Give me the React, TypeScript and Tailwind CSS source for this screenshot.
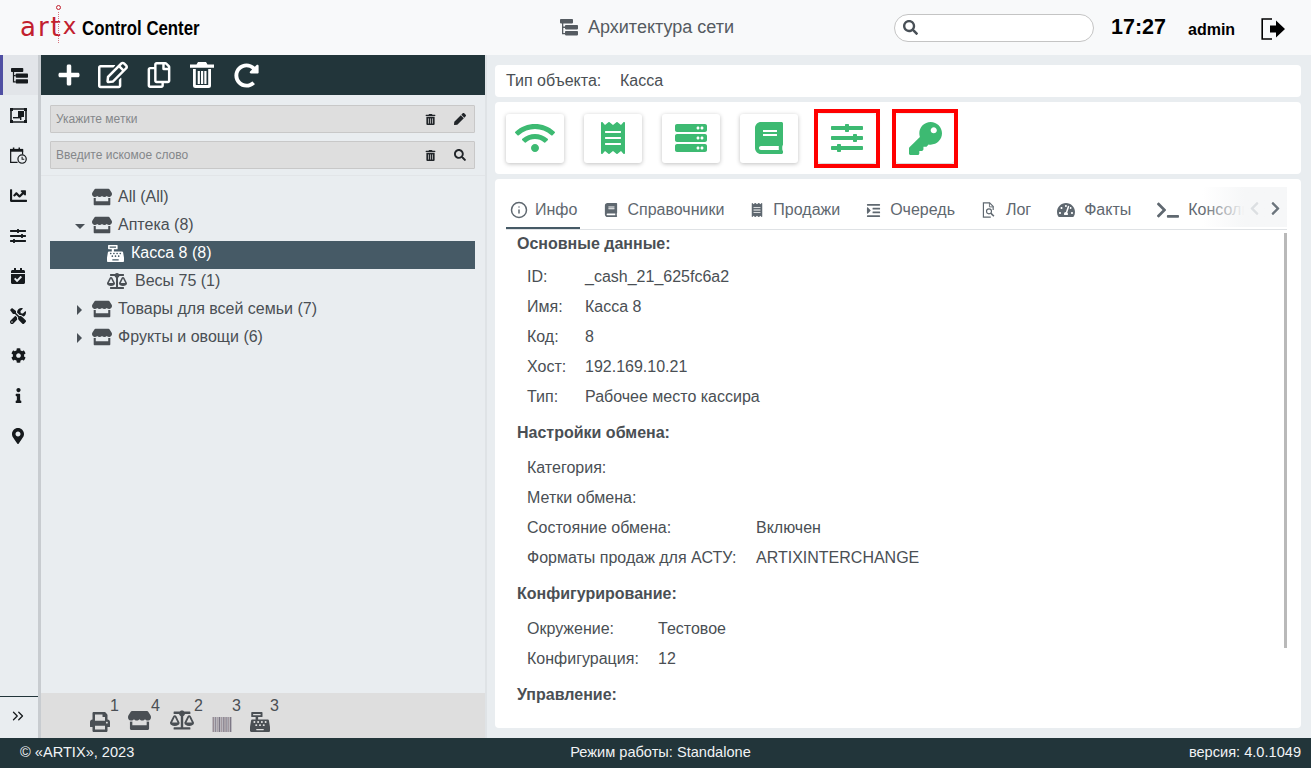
import { useState } from "react";
import { Info, ChevronsRight } from "lucide-react";
import {
  FaPlus,
  FaRegEdit,
  FaRegCopy,
  FaRedoAlt,
  FaChartLine,
  FaSlidersH,
  FaCalendarCheck,
  FaTools,
  FaCog,
  FaInfo,
  FaMapMarkerAlt,
  FaStore,
  FaCashRegister,
  FaBalanceScale,
  FaPrint,
  FaWifi,
  FaReceipt,
  FaServer,
  FaBook,
  FaKey,
  FaTrashAlt,
  FaPen,
  FaSearch,
  FaIndent,
  FaTachometerAlt,
  FaTerminal,
  FaChevronLeft,
  FaChevronRight,
} from "react-icons/fa";

const font = "font-['Liberation_Sans',Arial,sans-serif]";

const TreeIcon = ({ className }: { className?: string }) => (
  <svg viewBox="0 0 18 18" className={className} fill="currentColor">
    <rect x="0" y="1" width="13" height="4.4" rx="0.8" />
    <rect x="5" y="7" width="13" height="4.4" rx="0.8" />
    <rect x="5" y="13" width="13" height="4.4" rx="0.8" />
    <path d="M2 5h1.3v10H5v1.3H2zM3 8.6h2v1.3H3z" />
  </svg>
);

const GroupIcon = ({ className }: { className?: string }) => (
  <svg viewBox="0 0 17 15" className={className} fill="currentColor">
    <path d="M1 1h15v13H1z" fill="none" stroke="currentColor" strokeWidth="1.6" />
    <rect x="0" y="0" width="3" height="3" />
    <rect x="14" y="0" width="3" height="3" />
    <rect x="0" y="12" width="3" height="3" />
    <rect x="14" y="12" width="3" height="3" />
    <rect x="3" y="3" width="5" height="6" fill="#e9edf0" />
    <rect x="8" y="3" width="6" height="6" />
    <rect x="3" y="9" width="8" height="1.4" />
    <rect x="10" y="9" width="1.4" height="3" />
  </svg>
);

const CalendarClock = ({ className }: { className?: string }) => (
  <svg viewBox="0 0 18 18" className={className}>
    <path d="M0 2h14v3H0z" fill="currentColor" />
    <path d="M3 0.5h1.6v3H3zM9 0.5h1.6v3H9z" fill="currentColor" />
    <path d="M.7 4v12.3H8M13.3 4v4" fill="none" stroke="currentColor" strokeWidth="1.3" />
    <circle cx="12.8" cy="12.8" r="4.4" fill="#e9edf0" stroke="currentColor" strokeWidth="1.3" />
    <path d="M12.8 10.2v2.8h2.3" fill="none" stroke="currentColor" strokeWidth="1.1" />
  </svg>
);

const LogoutIcon = ({ className }: { className?: string }) => (
  <svg viewBox="0 0 25 22" className={className}>
    <path d="M11 1H1.2v20H11" fill="none" stroke="currentColor" strokeWidth="1.6" />
    <path d="M9 7.5h6V2.5l9 8.5-9 8.5v-5H9z" fill="currentColor" />
  </svg>
);

const BarcodeIcon = ({ className }: { className?: string }) => (
  <svg viewBox="0 0 20 15" className={className}>
    <rect width="20" height="15" fill="#b9b7bd" />
    {[1, 3, 5.5, 7, 9, 11, 12.5, 14.5, 16, 18].map((x, i) => (
      <rect key={x} x={x} width={i % 3 === 0 ? 1 : 0.7} height="15" fill={i % 2 ? "#7d7886" : "#9a8d94"} />
    ))}
  </svg>
);

const TrashBig = ({ className }: { className?: string }) => (
  <svg viewBox="0 0 24 26" className={className} fill="currentColor">
    <path d="M8 0h8l1.5 2.5H24v3.2H0V2.5h6.5z" />
    <path d="M3 7v16.5A2.5 2.5 0 0 0 5.500 26h13a2.500 2.500 0 0 0 2.500-2.500V7h-2.800v16h-12.400V7z" />
    <rect x="7.700" y="9" width="2.200" height="13" />
    <rect x="11" y="9" width="2.200" height="13" />
    <rect x="14.300" y="9" width="2.200" height="13" />
  </svg>
);

const LogFileIcon = ({ className }: { className?: string }) => (
  <svg viewBox="0 0 16 18" className={className} fill="none" stroke="currentColor">
    <path d="M10 17H1.700V1h7l4 4v4" strokeWidth="1.300" />
    <path d="M8.500 1v4.500h4.500" strokeWidth="1" />
    <circle cx="8" cy="10.500" r="2.800" strokeWidth="1.300" />
    <path d="M10 12.500l3.500 3.500" strokeWidth="1.800" />
  </svg>
);

const sideItems = [
  { icon: TreeIcon, size: "size-[17px]", active: true },
  { icon: GroupIcon, size: "size-[17px]" },
  { icon: CalendarClock, size: "size-[17px]" },
  { icon: FaChartLine, size: "size-[17px]" },
  { icon: FaSlidersH, size: "size-[16px]" },
  { icon: FaCalendarCheck, size: "size-[16px]" },
  { icon: FaTools, size: "size-[16px]" },
  { icon: FaCog, size: "size-[15px]" },
  { icon: FaInfo, size: "size-[15px]" },
  { icon: FaMapMarkerAlt, size: "size-[16px]" },
];

const actions = [
  { icon: FaWifi, size: "size-[40px]" },
  { icon: FaReceipt, size: "size-[32px]" },
  { icon: FaServer, size: "size-[32px]" },
  { icon: FaBook, size: "size-[32px]" },
  { icon: FaSlidersH, size: "size-[32px]", marked: true },
  { icon: FaKey, size: "size-[33px]", marked: true },
];

const tabs = [
  { icon: Info, label: "Инфо", size: "size-[18px]", active: true },
  { icon: FaBook, label: "Справочники", size: "size-[14px]" },
  { icon: FaReceipt, label: "Продажи", size: "size-[14px]" },
  { icon: FaIndent, label: "Очередь", size: "size-[15px]" },
  { icon: LogFileIcon, label: "Лог", size: "size-[16px]" },
  { icon: FaTachometerAlt, label: "Факты", size: "size-[18px]" },
  { icon: FaTerminal, label: "Консоль", size: "size-[22px]" },
];

const sections = [
  {
    title: "Основные данные:",
    labelWidth: "w-[58px]",
    mt: "mt-0",
    rowsTop: "mt-[15px]",
    rows: [
      ["ID:", "_cash_21_625fc6a2"],
      ["Имя:", "Касса 8"],
      ["Код:", "8"],
      ["Хост:", "192.169.10.21"],
      ["Тип:", "Рабочее место кассира"],
    ],
  },
  {
    title: "Настройки обмена:",
    labelWidth: "w-[229px]",
    mt: "mt-[18px]",
    rowsTop: "mt-[17px]",
    rows: [
      ["Категория:", ""],
      ["Метки обмена:", ""],
      ["Состояние обмена:", "Включен"],
      ["Форматы продаж для АСТУ:", "ARTIXINTERCHANGE"],
    ],
  },
  {
    title: "Конфигурирование:",
    labelWidth: "w-[131px]",
    mt: "mt-[18px]",
    rowsTop: "mt-[17px]",
    rows: [
      ["Окружение:", "Тестовое"],
      ["Конфигурация:", "12"],
    ],
  },
  { title: "Управление:", labelWidth: "", mt: "mt-[18px]", rowsTop: "", rows: [] },
];

const TreeRow = ({
  label,
  pad,
  caret,
  selected,
  icon: Icon,
  iconSize,
  gap,
}: {
  label: string;
  pad: string;
  caret?: "open" | "closed";
  selected?: boolean;
  icon: React.ElementType;
  iconSize: string;
  gap: string;
}) => (
  <div className={`flex h-[28px] items-center ${pad} ${selected ? "bg-[#465a66] pb-[4px] text-white" : "text-[#4a4f54]"}`}>
    {caret === "open" && <span className="mr-[7px] mt-[2px] h-0 w-0 border-x-[5px] border-t-[5px] border-x-transparent border-t-[#495057]" />}
    {caret === "closed" && <span className="ml-[2px] mr-[10px] mt-[2px] h-0 w-0 border-y-[5px] border-l-[5px] border-y-transparent border-l-[#495057]" />}
    <Icon className={iconSize} />
    <span className={`${gap} text-[16px]`}>{label}</span>
  </div>
);

const BottomStat = ({
  icon: Icon,
  n,
  size,
  width,
}: {
  icon: React.ElementType;
  n: number;
  size: string;
  width: string;
}) => (
  <div className={`flex ${width} items-end text-[#4a4f54]`}>
    <Icon className={`${size} mb-[6px]`} />
    <span className="mb-[24px] text-[16px] leading-none">{n}</span>
  </div>
);

export default function App() {
  const [tab] = useState("Инфо");

  return (
    <div className={`flex h-screen w-full flex-col overflow-hidden bg-[#e9edf0] ${font}`}>
      {/* Header */}
      <header className="flex h-[55px] shrink-0 items-center bg-[#f8f9fa]">
        <div className="relative ml-[20px] flex w-[200px] items-center">
          <span className="-mt-[2px] font-['DejaVu_Sans',sans-serif] text-[26px] leading-none tracking-[2px] text-[#c2202e]">art</span>
          <span className="absolute left-[37px] top-[-7px] flex h-[38px] w-[3px] flex-col items-center">
            <span className="size-[5px] shrink-0 rounded-full border border-[#c2202e]" />
            <span className="mt-[2px] h-full w-px border-l border-dotted border-[#d8737c]" />
          </span>
          <span className="-mt-[2px] font-['DejaVu_Sans',sans-serif] text-[23px] leading-none text-[#c2202e]">x</span>
          <span className="ml-[6px] origin-left scale-x-[0.8] whitespace-nowrap text-[21px] font-bold text-black">Control Center</span>
        </div>
        <div className="ml-[340px] -mt-[1px] flex w-[200px] items-center text-[#555b61]">
          <TreeIcon className="size-[18px]" />
          <span className="ml-[10px] whitespace-nowrap text-[18px]">Архитектура сети</span>
        </div>
        <div className="ml-[134px] flex h-[28px] w-[200px] items-center rounded-full border border-[#c4c4c4] bg-white pl-[8px]">
          <FaSearch className="size-[15px] text-[#495057]" />
        </div>
        <span className="ml-[17px] text-[21.500px] font-bold text-black">17:27</span>
        <span className="ml-[22px] mt-[5px] text-[16px] font-bold text-black">admin</span>
        <LogoutIcon className="ml-[26px] mt-[2px] h-[22px] w-[25px] text-black" />
      </header>

      <div className="flex min-h-0 flex-1">
        {/* Icon rail */}
        <nav className="flex w-[41px] shrink-0 flex-col border-r-[3px] border-[#c8ccd0] bg-[#e9edf0]">
          {sideItems.map((s, i) => (
            <div
              key={i}
              className={`flex h-[40px] items-center justify-center pr-[2px] pt-[1px] text-[#161a1d] ${s.active ? "border-l-[3px] border-[#4f4fa3] bg-[#e2e5e9]" : ""}`}
            >
              <s.icon className={s.size} />
            </div>
          ))}
          <div className="mt-auto flex h-[42px] items-center justify-center border-t border-[#22353a] pb-[3px] pr-[2px]">
            <ChevronsRight className="size-[18px] text-[#161a1d]" strokeWidth={1.700} />
          </div>
        </nav>

        {/* Tree panel */}
        <aside className="flex w-[446px] shrink-0 flex-col border-r-[2px] border-[#dfe3e6]">
          <div className="flex h-[40px] shrink-0 items-center gap-[16px] bg-[#22353a] pl-[16px] text-white">
            <FaPlus className="size-[24px]" />
            <FaRegEdit className="ml-[1px] size-[30px]" />
            <FaRegCopy className="ml-[2px] size-[26px]" />
            <TrashBig className="ml-[2px] h-[26px] w-[24px]" />
            <FaRedoAlt className="ml-[4px] size-[25px]" />
          </div>
          <div className="flex flex-col gap-[8px] border-b border-[#e2e5e8] pb-[6px] pl-[9px] pr-[10px] pt-[10px]">
            <div className="flex h-[28px] items-center rounded-[1px] border border-[#c8c8c8] bg-[#dedede] pl-[5px] text-[12px] text-[#84878a]">
              <span className="flex-1">Укажите метки</span>
              <FaTrashAlt className="mr-[18px] size-[11px] text-[#212529]" />
              <FaPen className="mr-[8px] size-[12px] text-[#212529]" />
            </div>
            <div className="flex h-[28px] items-center rounded-[1px] border border-[#c8c8c8] bg-[#dedede] pl-[5px] text-[12px] text-[#84878a]">
              <span className="flex-1">Введите искомое слово</span>
              <FaTrashAlt className="mr-[18px] size-[11px] text-[#212529]" />
              <FaSearch className="mr-[8px] size-[12px] text-[#212529]" />
            </div>
          </div>
          <div className="flex-1 pl-[9px] pr-[10px] pt-[7px]">
            <TreeRow label="All (All)" pad="pl-[42px]" icon={FaStore} iconSize="size-[20px]" gap="ml-[6px]" />
            <TreeRow label="Аптека (8)" pad="pl-[25px]" caret="open" icon={FaStore} iconSize="size-[20px]" gap="ml-[6px]" />
            <div className="-mb-[2px] mt-[2px]">
              <TreeRow label="Касса 8 (8)" pad="pl-[57px]" selected icon={FaCashRegister} iconSize="size-[17px]" gap="ml-[7px]" />
            </div>
            <TreeRow label="Весы 75 (1)" pad="pl-[57px]" icon={FaBalanceScale} iconSize="size-[20px]" gap="ml-[8px]" />
            <TreeRow label="Товары для всей семьи (7)" pad="pl-[25px]" caret="closed" icon={FaStore} iconSize="size-[20px]" gap="ml-[6px]" />
            <TreeRow label="Фрукты и овощи (6)" pad="pl-[25px]" caret="closed" icon={FaStore} iconSize="size-[20px]" gap="ml-[6px]" />
          </div>
          <div className="flex h-[45px] shrink-0 items-end bg-[#dedede] pl-[49px]">
            <BottomStat icon={FaPrint} n={1} size="size-[20px]" width="w-[38px]" />
            <BottomStat icon={FaStore} n={4} size="size-[23px]" width="w-[42px]" />
            <BottomStat icon={FaBalanceScale} n={2} size="size-[24px]" width="w-[42px]" />
            <BottomStat icon={BarcodeIcon} n={3} size="h-[15px] w-[20px]" width="w-[38px]" />
            <BottomStat icon={FaCashRegister} n={3} size="size-[20px]" width="w-[38px]" />
          </div>
        </aside>

        {/* Object panel */}
        <main className="flex min-w-0 flex-1 flex-col gap-[5px] pb-[10px] pl-[8px] pr-[10px] pt-[10px]">
          <div className="flex h-[32px] shrink-0 items-center rounded-[4px] bg-white pl-[11px] text-[16px] text-[#4a4f54]">
            <span className="w-[114px]">Тип объекта:</span>
            <span>Касса</span>
          </div>
          <div className="flex h-[72px] shrink-0 items-center gap-[20px] rounded-[4px] bg-white pl-[11px]">
            {actions.map((a, i) => (
              <div
                key={i}
                className={`flex w-[58px] items-center justify-center ${a.marked ? "h-[51px] outline-[4px] outline-solid outline-[#ff0000]" : "h-[49px]"}`}
              >
                <div className="flex h-[49px] w-[58px] items-center justify-center rounded-[3px] bg-white text-[#3dba72] shadow-[0_1px_4px_rgba(0,0,0,0.25)]">
                  <a.icon className={a.size} />
                </div>
              </div>
            ))}
          </div>
          <div className="flex min-h-0 flex-1 flex-col overflow-hidden rounded-[4px] bg-white pl-[11px] pr-[14px] pt-[8px]">
            <div className="relative h-[43px] shrink-0 overflow-hidden border-b border-[#dfe2e5]">
              <div className="flex h-full items-stretch gap-[19px] whitespace-nowrap">
                {tabs.map((t) => (
                  <div
                    key={t.label}
                    className={`flex h-[43px] shrink-0 items-center pl-[4px] pr-[3px] text-[16px] text-[#5f6870] ${t.label === tab ? "mr-[1px] gap-[7px] border-b-[3px] border-[#465a66] pt-[6px]" : "gap-[9px] pt-[3px]"}`}
                  >
                    <t.icon className={t.size} />
                    <span>{t.label}</span>
                  </div>
                ))}
              </div>
              <div className="absolute right-0 top-0 flex h-[40px] w-[85px] items-center justify-end gap-[6px] bg-gradient-to-r from-transparent via-[#f6f7f8] to-[#f6f7f8] pr-[4px] pt-[3px]">
                <FaChevronLeft className="size-[15px] text-[#dcdfe2]" />
                <FaChevronRight className="size-[15px] text-[#6c757d]" />
              </div>
            </div>
            <div className="relative min-h-0 flex-1 overflow-hidden pl-[11px] pt-[5px] text-[16px] text-[#4a4f54]">
              {sections.map((s) => (
                <section key={s.title} className={s.mt}>
                  <h3 className="font-bold leading-[18px]">{s.title}</h3>
                  <div className={`${s.rowsTop} flex flex-col gap-[12px] pl-[10px]`}>
                    {s.rows.map(([k, v]) => (
                      <div key={k} className="flex h-[18px] items-center leading-[18px]">
                        <span className={`${s.labelWidth} shrink-0`}>{k}</span>
                        <span>{v}</span>
                      </div>
                    ))}
                  </div>
                </section>
              ))}
              <span className="absolute right-0 top-[3px] h-[415px] w-[3px] bg-[#b9b9b9]" />
            </div>
          </div>
        </main>
      </div>

      {/* Footer */}
      <footer className="grid h-[30px] shrink-0 grid-cols-3 items-center bg-[#22353a] pl-[20px] pr-[10px] text-[14.600px] text-[#f1f3f5]">
        <span>© «ARTIX», 2023</span>
        <span className="whitespace-nowrap text-center">Режим работы: Standalone</span>
        <span className="text-right">версия: 4.0.1049</span>
      </footer>
    </div>
  );
}
